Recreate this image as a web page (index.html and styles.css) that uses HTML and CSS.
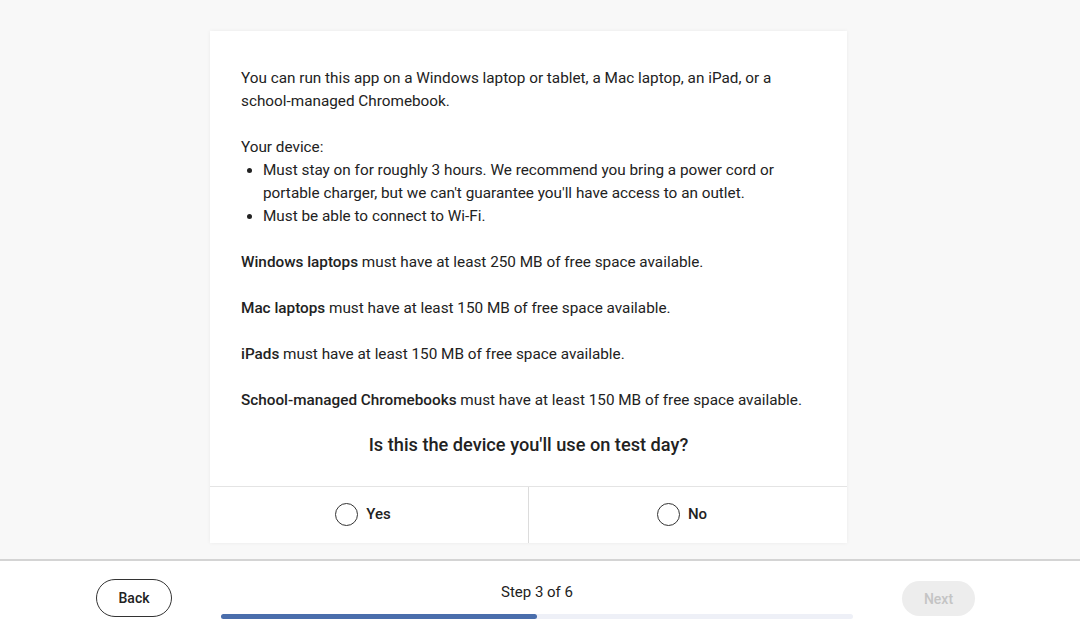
FILE: index.html
```html
<!DOCTYPE html>
<html>
<head>
<meta charset="utf-8">
<link rel="stylesheet" href="styles.css">
</head>
<body>
<main class="stage">
  <section class="card">
    <div class="content">
      <p>You can run this app on a Windows laptop or tablet, a Mac laptop, an iPad, or a <span class="nw">school-managed</span> Chromebook.</p>
      <div class="device">
        <p class="lead">Your device:</p>
        <ul>
          <li>Must stay on for roughly 3 hours. We recommend you bring a power cord or portable charger, but we can't guarantee you'll have access to an outlet.</li>
          <li>Must be able to connect to Wi-Fi.</li>
        </ul>
      </div>
      <p><b>Windows laptops</b> must have at least 250 MB of free space available.</p>
      <p><b>Mac laptops</b> must have at least 150 MB of free space available.</p>
      <p><b>iPads</b> must have at least 150 MB of free space available.</p>
      <p><b>School-managed Chromebooks</b> must have at least 150 MB of free space available.</p>
      <h2 class="question">Is this the device you'll use on test day?</h2>
    </div>
    <div class="choices">
      <label class="choice"><span class="radio"></span><span>Yes</span></label>
      <label class="choice"><span class="radio"></span><span>No</span></label>
    </div>
  </section>
</main>
<footer class="footer">
  <button class="btn back">Back</button>
  <div class="progress">
    <div class="step">Step 3 of 6</div>
    <div class="track"><div class="fill" style="width:50%"></div></div>
  </div>
  <button class="btn next" disabled>Next</button>
</footer>
</body>
</html>
```
FILE: styles.css
```css
* { box-sizing: border-box; }
html, body { margin: 0; padding: 0; }
body {
  width: 1080px;
  height: 635px;
  background: #f8f8f8;
  font-family: Roboto, "Liberation Sans", sans-serif;
  color: #222;
  display: flex;
  flex-direction: column;
  overflow: hidden;
}
.stage {
  height: 559px;
  display: flex;
  justify-content: flex-start;
  padding: 31px 0 0 210px;
}
.card {
  width: 637px;
  height: 512px;
  background: #fff;
  box-shadow: 0 0 4px rgba(0,0,0,0.06);
  display: flex;
  flex-direction: column;
}
.content {
  padding: 36px 31px 0;
  font-size: 15.3px;
  line-height: 23px;
}
.nw { white-space: nowrap; }
.content p { margin: 0 0 23px; }
.content b { font-weight: 500; }
.device p.lead { margin: 0; }
.device ul {
  margin: 0 0 23px;
  padding-left: 22px;
}
.question {
  margin: -2px 0 0;
  text-align: center;
  font-size: 18.2px;
  font-weight: 500;
  line-height: 23px;
  padding-bottom: 30px;
}
.choices {
  border-top: 1px solid #e4e4e4;
  display: flex;
  flex: 1;
}
.choice {
  flex: 1;
  display: flex;
  align-items: center;
  justify-content: center;
  gap: 8px;
  font-size: 15px;
  font-weight: 500;
  padding: 0 12px 2px 0;
}
.choice + .choice { border-left: 1px solid #dcdcdc; }
.radio {
  width: 23px;
  height: 23px;
  border: 1.6px solid #333;
  border-radius: 50%;
}
.footer {
  flex: 1;
  background: #fff;
  border-top: 2px solid #d4d4d4;
  display: flex;
  align-items: flex-start;
  gap: 49px;
  padding: 0 105px 0 96px;
}
.btn {
  font-family: Roboto, "Liberation Sans", sans-serif;
  font-size: 14px;
  font-weight: 500;
  border-radius: 20px;
}
.back {
  width: 76px;
  height: 38px;
  margin-top: 18px;
  background: #fff;
  border: 1px solid #333;
  color: #222;
}
.next {
  width: 73px;
  height: 35px;
  margin-top: 20px;
  background: #ededed;
  border: none;
  color: #c4c4c4;
}
.progress {
  flex: 1;
  padding-top: 21px;
  display: flex;
  flex-direction: column;
  align-items: center;
}
.step {
  font-size: 15px;
  line-height: 20px;
  color: #222;
}
.track {
  width: 100%;
  height: 5px;
  margin-top: 12px;
  background: #eef0f7;
  border-radius: 3px;
}
.fill {
  height: 100%;
  background: #4a6eac;
  border-radius: 3px;
}
```
